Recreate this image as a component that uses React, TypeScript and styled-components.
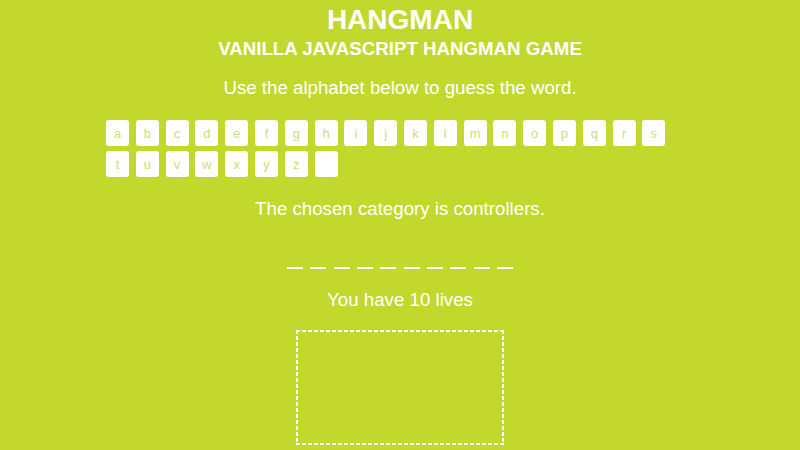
import { useState } from "react";
import { styled, createGlobalStyle } from "styled-components";

const GlobalStyle = createGlobalStyle`
  html, body {
    margin: 0;
    padding: 0;
    background: #c2d82c;
  }
  body {
    font-family: "Liberation Sans", Arial, sans-serif;
    color: #fff;
  }
`;

const letters = "abcdefghijklmnopqrstuvwxyz".split("").concat([""]);

const Hangman = () => {
  const [picked, setPicked] = useState<string[]>([]);
  const word = "controllers".slice(0, 10);
  const lives = 10;

  const handlePick = (letter: string) => {
    if (!letter || picked.includes(letter)) return;
    setPicked((prev) => [...prev, letter]);
  };

  return (
    <Wrapper>
      <GlobalStyle />
      <Title>HANGMAN</Title>
      <Subtitle>VANILLA JAVASCRIPT HANGMAN GAME</Subtitle>
      <Hint>Use the alphabet below to guess the word.</Hint>

      <Alphabet>
        {letters.map((letter, i) => (
          <LetterKey
            key={i}
            $active={picked.includes(letter)}
            onClick={() => handlePick(letter)}
          >
            {letter}
          </LetterKey>
        ))}
      </Alphabet>

      <Category>The chosen category is controllers.</Category>

      <Blanks>
        {word.split("").map((_, i) => (
          <Blank key={i} />
        ))}
      </Blanks>

      <Lives>You have {lives} lives</Lives>

      <Stickman />
    </Wrapper>
  );
};

export default Hangman;

const Wrapper = styled.div`
  display: flex;
  flex-direction: column;
  align-items: center;
  text-align: center;
`;

const Title = styled.h1`
  margin: 6px 0 0;
  font-size: 28px;
  line-height: 28px;
  font-weight: 700;
`;

const Subtitle = styled.h2`
  margin: 4.5px 0 0;
  font-size: 18.7px;
  line-height: 19px;
  font-weight: 700;
`;

const Hint = styled.p`
  margin: 20px 0 0;
  font-size: 18.7px;
  line-height: 20px;
`;

const Alphabet = styled.ul`
  display: flex;
  flex-wrap: wrap;
  column-gap: 6.8px;
  row-gap: 5px;
  width: 588px;
  margin: 22.5px 0 0;
  padding: 0;
  list-style: none;
`;

const LetterKey = styled.li<{ $active: boolean }>`
  display: flex;
  justify-content: center;
  align-items: center;
  width: 23px;
  height: 26px;
  background: #fff;
  border-radius: 3px;
  color: #d0de6c;
  font-size: 13px;
  cursor: pointer;
  opacity: ${(p) => (p.$active ? 0.4 : 1)};
`;

const Category = styled.p`
  margin: 21.5px 0 0;
  font-size: 18.7px;
  line-height: 20px;
`;

const Blanks = styled.ul`
  display: flex;
  gap: 7.4px;
  margin: 48.5px 0 0;
  padding: 0;
  list-style: none;
`;

const Blank = styled.li`
  width: 16px;
  height: 2px;
  background: #fff;
`;

const Lives = styled.p`
  margin: 20.5px 0 0;
  font-size: 18.7px;
  line-height: 20px;
`;

/* dashed frame drawn with gradients: 4px dash, 2px gap */
const Stickman = styled.div`
  width: 208px;
  height: 115px;
  margin-top: 20.5px;
  background-image:
    repeating-linear-gradient(90deg, #fff 0 4px, transparent 4px 6px),
    repeating-linear-gradient(90deg, #fff 0 4px, transparent 4px 6px),
    repeating-linear-gradient(180deg, #fff 0 4px, transparent 4px 6px),
    repeating-linear-gradient(180deg, #fff 0 4px, transparent 4px 6px);
  background-size: 100% 2px, 100% 2px, 2px 100%, 2px 100%;
  background-position: 0 0, 0 100%, 0 0, 100% 0;
  background-repeat: no-repeat;
`;
